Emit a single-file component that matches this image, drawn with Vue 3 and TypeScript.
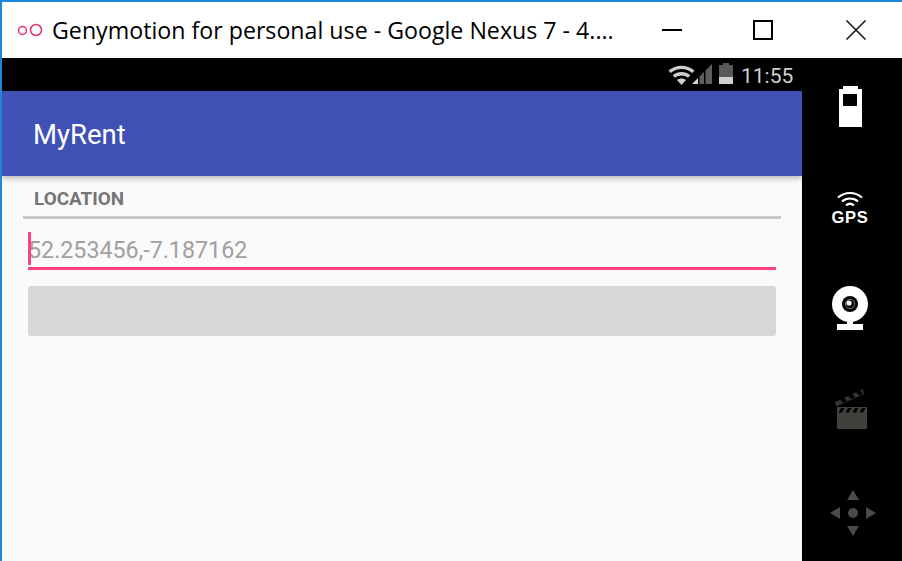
<template>
  <div class="window">
    <header class="titlebar">
      <svg class="logo" width="36" height="20" viewBox="0 0 36 20">
        <circle cx="5.5" cy="10.5" r="4" />
        <circle cx="19" cy="10" r="5.5" />
      </svg>
      <span class="window-title">Genymotion for personal use - Google Nexus 7 - 4....</span>
      <div class="controls">
        <svg width="20" height="20" viewBox="0 0 20 20"><path d="M0 10h20" stroke="#000" stroke-width="2" /></svg>
        <svg width="20" height="20" viewBox="0 0 20 20"><rect x="1" y="1" width="18" height="18" fill="none" stroke="#000" stroke-width="2" /></svg>
        <svg class="close" width="20" height="20" viewBox="0 0 20 20"><path d="M0.5 0.5l19 19M19.5 0.5l-19 19" stroke="#111" stroke-width="1.5" /></svg>
      </div>
    </header>

    <div class="device">
      <main class="screen">
        <div class="statusbar">
          <svg width="27" height="20" viewBox="0 0 27 20" class="wifi">
            <path d="M0.5 5.5C8 -1 19 -1 26.5 5.5L24.3 8C18 2.7 9 2.7 2.7 8Z" fill="#cfcfcf" />
            <path d="M4.7 10.2C9.7 6 17.3 6 22.3 10.2L20 12.8C16.2 9.7 10.8 9.7 7 12.8Z" fill="#cfcfcf" />
            <path d="M9 15C11.6 13 15.4 13 18 15L13.5 20Z" fill="#cfcfcf" />
          </svg>
          <svg width="20" height="20" viewBox="0 0 20 20" class="signal">
            <path d="M0 20L6 14V20Z" fill="#d6d6d6" />
            <path d="M7.5 12.5L12 8V20H7.5Z" fill="#5e5e5e" />
            <path d="M13.5 6.5L20 0V20H13.5Z" fill="#5e5e5e" />
          </svg>
          <svg width="14" height="21" viewBox="0 0 14 21" class="batt">
            <path d="M4 0H10V2H14V14H0V2H4Z" fill="#595959" />
            <rect y="14" width="14" height="7" fill="#cfcfcf" />
          </svg>
          <span class="clock">11:55</span>
        </div>

        <div class="appbar">MyRent</div>

        <div class="content">
          <h2 class="section">LOCATION</h2>
          <div class="field">
            <span class="caret"></span>
            <span class="value">52.253456,-7.187162</span>
          </div>
          <div class="button"></div>
        </div>
      </main>

      <aside class="sidebar">
        <svg class="ic-battery" width="24" height="42" viewBox="0 0 24 42">
          <path fill-rule="evenodd" fill="#fff" d="M4 0H19V3H23V41H0V3H4ZM4 8V20H18V8Z" />
        </svg>

        <div class="gps">
          <svg width="28" height="16" viewBox="0 0 28 16" fill="none" stroke="#fff" stroke-width="2.2">
            <path d="M2 6.5C9 0.5 19 0.5 26 6.5" />
            <path d="M6 10.5C10.5 6.5 17.5 6.5 22 10.5" />
            <path d="M10 14.5C12.5 12.3 15.5 12.3 18 14.5" />
          </svg>
          <span>GPS</span>
        </div>

        <svg class="ic-cam" width="38" height="46" viewBox="0 0 38 46">
          <circle cx="19" cy="18" r="18" fill="#fff" />
          <circle cx="19" cy="18" r="8" fill="#000" />
          <circle cx="19" cy="18" r="4.6" fill="none" stroke="#777" stroke-width="1" />
          <circle cx="18" cy="17" r="2.6" fill="#f2f2f2" />
          <rect x="16" y="35" width="6" height="5" fill="#fff" />
          <rect x="6" y="38" width="26" height="6" fill="#fff" />
        </svg>

        <svg class="ic-clap" width="32" height="42" viewBox="0 0 32 42">
          <g fill="#3f403c">
            <rect x="2" y="19" width="30" height="22" />
            <path d="M0 14L28 1L29 6L1 18.500Z" fill="#343532" />
          </g>
          <g fill="#000">
            <path d="M6 20L9.500 20L7 24.500L3.500 24.500ZM13 20L16.500 20L14 24.500L10.500 24.500ZM20 20L23.500 20L21 24.500L17.500 24.500ZM27 20L30.500 20L28 24.500L24.500 24.500Z" />
            <path d="M5 11.500L9 9.700L12 13L8 14.800ZM13 7.800L17 6L20 9.300L16 11.100ZM21 4.100L25 2.300L28 5.600L24 7.400Z" />
          </g>
        </svg>

        <svg class="ic-dpad" width="46" height="46" viewBox="0 0 46 46" fill="#4a4a48">
          <circle cx="23" cy="23" r="5" />
          <path d="M23 0L29 10H17Z" />
          <path d="M23 46L29 36H17Z" />
          <path d="M0 23L10 17V29Z" />
          <path d="M46 23L36 17V29Z" />
        </svg>
      </aside>
    </div>
  </div>
</template>

<script setup lang="ts">
</script>

<style>
html,
body {
  margin: 0;
  overflow: hidden;
}
</style>

<style scoped>
.window {
  width: 902px;
  height: 561px;
  box-sizing: border-box;
  border-top: 2px solid #1c86d9;
  border-left: 2px solid #1c86d9;
  display: flex;
  flex-direction: column;
  background: #000;
  overflow: hidden;
}

.titlebar {
  height: 56px;
  flex: none;
  background: #fff;
  display: flex;
  align-items: center;
}

.logo {
  margin-left: 15px;
  flex: none;
  fill: none;
  stroke: #e8306a;
  stroke-width: 1.5;
}

.window-title {
  margin: -1px 0 0 -1px;
  font-family: "Open Sans", sans-serif;
  font-size: 23.2px;
  color: #000;
  white-space: nowrap;
  flex: 1;
}

.controls {
  display: flex;
  gap: 71px;
  margin-right: 36px;
}

.controls svg {
  display: block;
}

.controls .close {
  margin-left: 2px;
}

.device {
  flex: 1;
  display: flex;
  min-height: 0;
}

.screen {
  width: 800px;
  flex: none;
  display: flex;
  flex-direction: column;
}

.statusbar {
  height: 33px;
  flex: none;
  display: flex;
  align-items: flex-start;
  padding-left: 666px;
  box-sizing: border-box;
}

.wifi {
  margin-top: 7px;
}

.signal {
  margin-top: 6px;
  margin-left: -3px;
}

.batt {
  margin-top: 5px;
  margin-left: 7px;
}

.clock {
  margin-left: 8px;
  margin-top: 5px;
  font-family: Roboto, sans-serif;
  font-size: 21px;
  line-height: 26px;
  color: #cfcfcf;
}

.appbar {
  height: 85px;
  flex: none;
  box-sizing: border-box;
  padding: 2px 0 0 31px;
  display: flex;
  align-items: center;
  background: #3f51b5;
  color: #fff;
  font-family: Roboto, sans-serif;
  font-size: 27.5px;
  position: relative;
  box-shadow: 0 2px 6px rgba(0, 0, 0, 0.3);
}

.content {
  flex: 1;
  background: #fafafa;
  display: flex;
  flex-direction: column;
  align-items: flex-start;
  padding-left: 21px;
}

.section {
  margin: 0;
  width: 758px;
  height: 43px;
  box-sizing: border-box;
  padding: 11px 0 0 11px;
  border-bottom: 3px solid #c8c8c8;
  font-family: Roboto, sans-serif;
  font-weight: 700;
  font-size: 18.9px;
  line-height: 24px;
  color: #757575;
}

.field {
  position: relative;
  margin: 13px 0 0 5px;
  width: 748px;
  height: 38px;
  box-sizing: border-box;
  border-bottom: 3px solid #ff4081;
  font-family: Roboto, sans-serif;
  font-size: 23.25px;
  line-height: 36px;
  color: #a0a0a0;
}

.caret {
  position: absolute;
  left: 0;
  top: 0;
  width: 3px;
  height: 33px;
  background: #ff4081;
}

.button {
  margin: 16px 0 0 5px;
  width: 748px;
  height: 50px;
  border-radius: 3px;
  background: #d6d7d7;
}

.sidebar {
  flex: 1;
  display: flex;
  flex-direction: column;
  align-items: center;
  padding-top: 28px;
  padding-right: 4px;
  box-sizing: border-box;
}

.sidebar > svg {
  display: block;
  flex: none;
}

.ic-battery {
  margin-left: 2px;
}

.gps {
  margin-top: 63px;
  height: 34px;
  display: flex;
  flex-direction: column;
  align-items: center;
}

.gps svg {
  display: block;
  margin-bottom: 3px;
}

.gps span {
  font-family: "Liberation Sans", sans-serif;
  font-weight: 700;
  font-size: 16.5px;
  line-height: 15px;
  letter-spacing: 0.8px;
  color: #fff;
}

.ic-cam {
  margin-top: 61px;
}

.ic-clap {
  margin-top: 56px;
  margin-left: 2px;
}

.ic-dpad {
  margin-top: 60px;
  margin-left: 5px;
}
</style>
